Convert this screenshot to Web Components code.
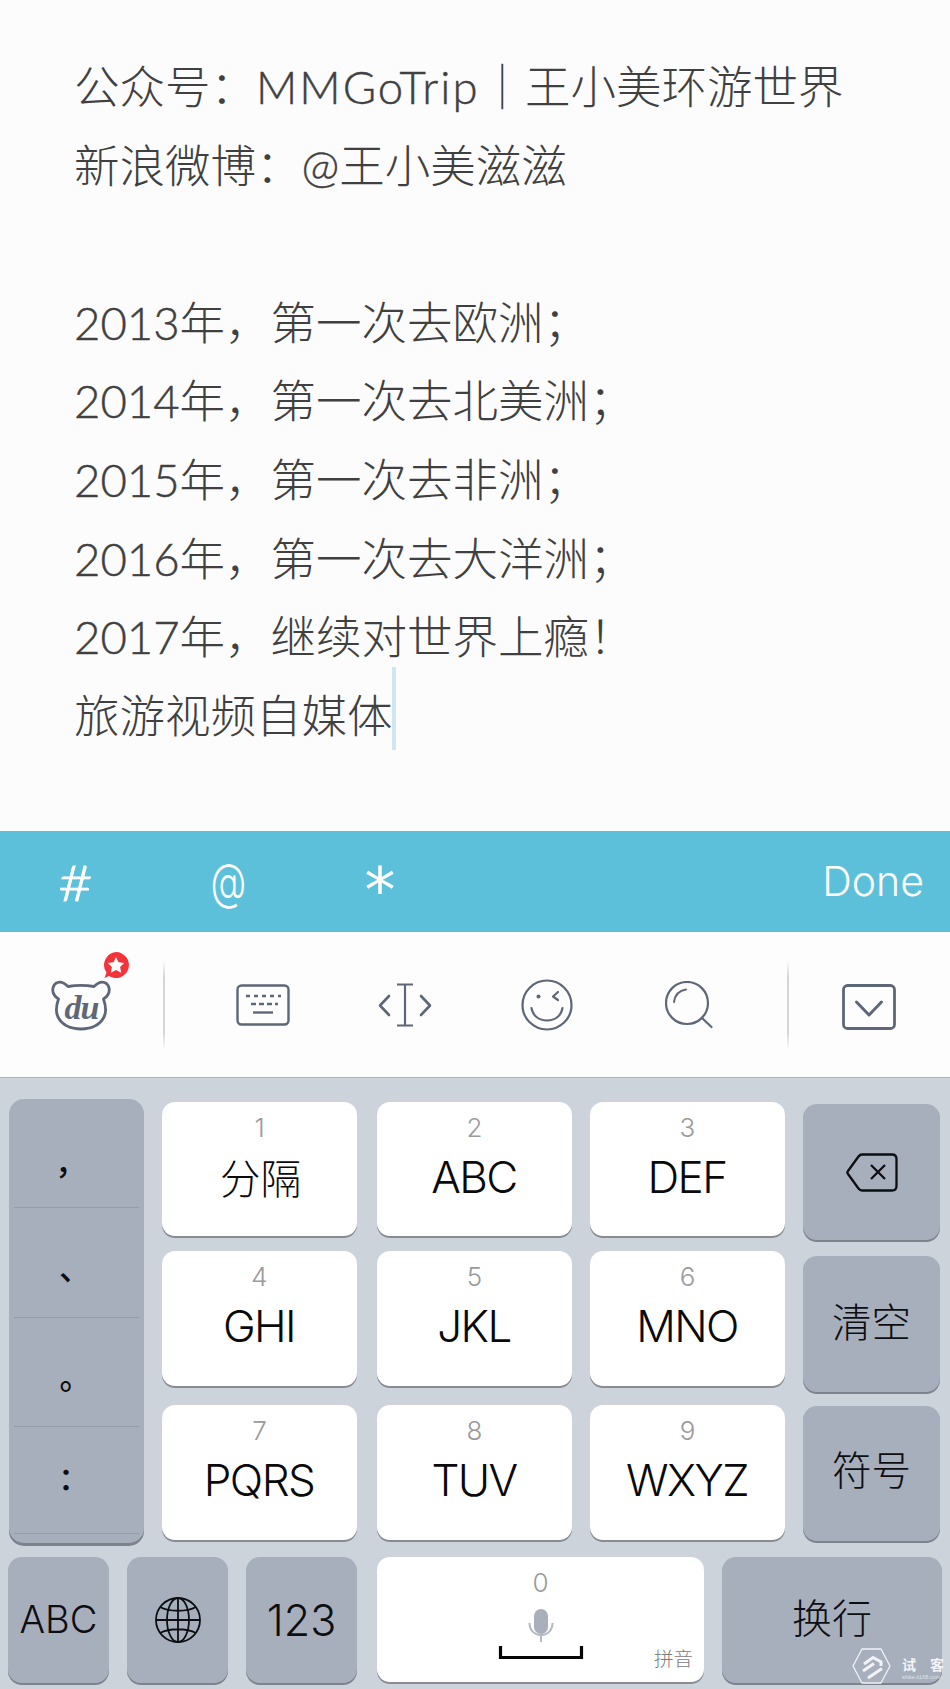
<!DOCTYPE html>
<html lang="zh"><head><meta charset="utf-8">
<style>
html,body{margin:0;padding:0;background:#cdd3db}
body{width:950px;height:1689px;overflow:hidden;font-family:"Noto Sans CJK SC",sans-serif}
</style></head>
<body>
<phone-screen>
<note-editor></note-editor>
<accessory-bar></accessory-bar>
<ime-toolbar></ime-toolbar>
<t9-keyboard></t9-keyboard>
</phone-screen>
<script>
function def(name,html){
  customElements.define(name,class extends HTMLElement{
    constructor(){super();const r=this.attachShadow({mode:'open'});r.innerHTML=typeof html==='function'?html(this):html;}
  });
}
def('phone-screen',`<style>:host{display:flex;flex-direction:column;width:950px;height:1689px;position:relative;overflow:hidden}</style><slot></slot>`);

def('note-editor',`<style>
:host{display:block;height:831px;box-sizing:border-box;background:#fcfcfc;padding:45px 0 0 74px;color:#404040;
font:300 45.500px/78.600px "Noto Sans CJK SC",sans-serif}
div{height:78.600px;white-space:nowrap}
i{font:300 45.500px/1 "Lato",sans-serif;-webkit-text-stroke:.45px #404040}
.w{letter-spacing:2px}
.c{display:inline-block;width:4px;height:0;position:relative;margin-left:-1px}
.c::after{content:"";position:absolute;left:0;top:-66px;width:4px;height:83px;background:#cfe7f1}
</style>
<div>公众号：<i class="w">MMGoTrip</i>｜王小美环游世界</div>
<div>新浪微博：<i>@</i>王小美滋滋</div>
<div></div>
<div><i>2013</i>年，第一次去欧洲；</div>
<div><i>2014</i>年，第一次去北美洲；</div>
<div><i>2015</i>年，第一次去非洲；</div>
<div><i>2016</i>年，第一次去大洋洲；</div>
<div><i>2017</i>年，继续对世界上瘾！</div>
<div>旅游视频自媒体<span class="c"></span></div>`);

def('accessory-bar',`<style>
:host{display:flex;height:101px;background:#5dc0da;color:#fff;align-items:center;font:300 42px/1 "Inter",sans-serif}
.s{width:152px;text-align:center}
.s b{display:inline-block;font-weight:inherit}
.d{margin-left:auto;padding-right:26px;font-size:41px}
</style>
<span class="s" style="font:300 50px/1 'Lato';-webkit-text-stroke:.8px #fff"><b style="transform:scale(1.2,1)">#</b></span>
<span class="s" style="font:300 54px/1 'Inter'"><b style="transform:scale(.68,.92)">@</b></span>
<span class="s" style="font:400 62px/1 'DejaVu Sans';padding-top:18px"><b>*</b></span>
<span class="d">Done</span>`);

const S='fill="none" stroke="#5d6778" stroke-linecap="round" stroke-linejoin="round"';
def('ime-toolbar',`<style>
:host{display:flex;height:146px;box-sizing:border-box;background:#fdfdfd;border-bottom:1px solid #aeb2b8;align-items:center}
.du{width:163px;height:100%;position:relative;display:flex;align-items:center;justify-content:center}
.sep{width:2px;height:90px;background:linear-gradient(#fdfdfd,#d3d5d8 20%,#d3d5d8 80%,#fdfdfd);align-self:flex-start;margin-top:28px}
.mid{display:flex;padding-left:27px;width:595px}
.cell{width:142px;display:flex;justify-content:center;align-items:center;height:60px;flex:none}
.end{flex:1;display:flex;justify-content:center;padding:4px 2px 0 0}
.bear{position:relative;width:60px;height:52px;margin:1px 0 0 -2px}
.bear svg{position:absolute;left:0;top:0}
.bear span{position:absolute;left:2px;right:0;top:14px;text-align:center;font:italic 700 34px/30px "Liberation Serif",serif;color:#5d6778;letter-spacing:-1px}
.badge{position:absolute;left:102px;top:19px}
</style>
<div class="du">
  <div class="bear"><svg width="60" height="52" viewBox="0 0 60 52"><path d="M17 7.500C13 3.500 9 2.500 6.500 3.500C2 5 .5 11 3 15.500C4 17.500 6 19 7.500 20C5 27 4.500 33 7 38C11 46 20 50 30 50C40 50 49 46 53 38C55.500 33 55 27 52.500 20C54 19 56 17.500 57 15.500C59.500 11 58 5 53.500 3.500C51 2.500 47 3.500 43 7.500C35 6 25 6 17 7.500Z" ${S} stroke-width="2.800"/></svg><span>du</span></div>
  <svg class="badge" width="28" height="28" viewBox="0 0 28 28"><path d="M14 1A13 13 0 1 1 7 25L2.500 27L4.500 21.500A13 13 0 0 1 14 1Z" fill="#f2333b"/><path d="M14 6l2.500 5.200 5.700.8-4.100 4 1 5.700-5.100-2.700-5.100 2.700 1-5.700-4.100-4 5.700-.8z" fill="#fff"/></svg>
</div>
<div class="sep"></div>
<div class="mid">
 <div class="cell"><svg width="54" height="42" viewBox="0 0 54 42"><rect x="1.500" y="1.500" width="51" height="39" rx="4" ${S} stroke-width="2.400"/><path d="M10 12h4M18 12h4M26 12h4M34 12h4M42 12h3M15 20h5M23 20h5M31 20h5M39 20h3" stroke="#5d6778" stroke-width="2.400"/><path d="M17 28.500h20" stroke="#5d6778" stroke-width="2.400"/></svg></div>
 <div class="cell"><svg width="54" height="44" viewBox="0 0 54 44"><path d="M11 13L2 22.500L11 32M43 13L52 22.500L43 32" ${S} stroke-width="2.600"/><path d="M19 1.500H35M27 1.500V42.500M19 42.500H35" fill="none" stroke="#5d6778" stroke-width="2.200"/></svg></div>
 <div class="cell"><svg width="52" height="52" viewBox="0 0 52 52"><circle cx="26" cy="26" r="24.500" ${S} stroke-width="2.200"/><circle cx="17.500" cy="17.500" r="2" fill="#5d6778"/><path d="M37 13L32 17.500L37 21" ${S} stroke-width="2.200"/><path d="M10.500 29C12 37 18 41.500 26 41.500C34 41.500 40 37 41.500 29" ${S} stroke-width="2.200"/></svg></div>
 <div class="cell"><svg width="48" height="48" viewBox="0 0 48 48"><circle cx="22" cy="22" r="21" ${S} stroke-width="2.200"/><path d="M9 21C10 14 14 9.500 21 8.500" ${S} stroke-width="2"/><path d="M37 37L46.500 46" ${S} stroke-width="2.200"/></svg></div>
</div>
<div class="sep"></div>
<div class="end"><svg width="54" height="46" viewBox="0 0 54 46"><rect x="1.500" y="1.500" width="51" height="43" rx="4" ${S} stroke-width="2.800"/><path d="M14.500 18L27 31L39.500 18" ${S} stroke-width="3"/></svg></div>`);

def('t9-key',(h)=>{
 const n=h.getAttribute('n')||'',l=h.getAttribute('l')||'';
 return `<style>
:host{display:grid;grid-template-rows:52px 46px;justify-items:center;align-items:center;background:#fff;border-radius:13px;box-shadow:0 2px 0 #868b94;width:195px;position:relative}
.n{font:300 26px/1 "Inter",sans-serif;color:#9a9a9c}
.l{font:300 44px/1 "Inter","Noto Sans CJK SC",sans-serif;color:#0a0a0a;letter-spacing:-1.600px;white-space:nowrap;margin-right:1px}
.l.z{font:300 40.500px/1 "Noto Sans CJK SC",sans-serif;letter-spacing:0;margin:0 0 0 2px}
</style><span class="n">${n}</span><span class="l ${/[^\x00-\x7f]/.test(l)?'z':''}">${l}</span>`});

def('gray-key',(h)=>{
 const f=h.getAttribute('f')||'39.5';
 return `<style>
:host{display:flex;align-items:center;justify-content:center;background:#a8afbc;border-radius:14px;box-shadow:0 2px 0 #7d828c;color:#0c0e12;
font:300 ${f}px/1 "Inter","Noto Sans CJK SC",sans-serif;box-sizing:border-box;white-space:nowrap;padding-bottom:${h.getAttribute('pb')||0}px}
</style><slot></slot>`});

def('punct-column',`<style>
:host{display:block;width:135px;height:444px;margin-top:21px;flex:none;background:#a8afbc;border-radius:15px;box-shadow:0 3px 0 #7d828c;position:relative;overflow:hidden;
font:500 32px/1 "Noto Sans CJK SC",sans-serif;color:#0c0e12}
div{box-sizing:border-box;margin:0 5px;border-bottom:1px solid #959ca9;display:flex;align-items:center;justify-content:center;padding-right:5px}
</style>
<div style="height:109px;padding:13px 11px 0 0">，</div><div style="height:110px;padding-top:6px;padding-right:3px">、</div><div style="height:109px;padding-top:5px;padding-right:2px">。</div><div style="height:107px;padding-bottom:8px">：</div>`);

def('t9-keyboard',`<style>
:host{display:block;flex:1;background:#cdd3db;position:relative;box-sizing:border-box;padding-left:9px}
.top{display:flex;height:464px}
.grid{display:grid;grid-template-columns:215px 213px 195px;grid-template-rows:134px 135px 135px;row-gap:15px;margin:24px 0 0 18px;height:434px}
.grid t9-key:nth-child(n+7){margin-top:4px;height:135px}
.right{display:flex;flex-direction:column;width:137px;margin:26px 0 0 18px;gap:16px}
.right gray-key:nth-child(1){height:136px}
.right gray-key:nth-child(2){height:136px}
.right gray-key:nth-child(3){height:135px;margin-top:-2px}
.bottom{display:flex;margin:0 0 0 -1px;height:126px;align-items:flex-start;padding-top:15px}
.b1{width:101px;height:126px}.b2{width:101px;height:126px;margin-left:18px}.b3{width:111px;height:126px;margin-left:18px}
.space{width:327px;height:125px;margin-left:20px;display:grid;grid-template-rows:52px 33px 13px;align-content:start;justify-items:center;align-items:center}
.b4{width:220px;height:126px;margin-left:18px}
.py{position:absolute;right:11px;bottom:15px;font:300 19.500px/1 "Noto Sans CJK SC",sans-serif;color:#7b7b7d}
.n0{font:300 26px/1 "Inter",sans-serif;color:#9a9a9c}
.space{background:#fff;border-radius:13px;box-shadow:0 2px 0 #868b94;position:relative}
.br{margin-top:8px;display:block;overflow:visible}
</style>
<div class="top">
 <punct-column></punct-column>
 <div class="grid">
  <t9-key n="1" l="分隔"></t9-key><t9-key n="2" l="ABC"></t9-key><t9-key n="3" l="DEF"></t9-key>
  <t9-key n="4" l="GHI"></t9-key><t9-key n="5" l="JKL"></t9-key><t9-key n="6" l="MNO"></t9-key>
  <t9-key n="7" l="PQRS"></t9-key><t9-key n="8" l="TUV"></t9-key><t9-key n="9" l="WXYZ"></t9-key>
 </div>
 <div class="right">
  <gray-key><svg width="52" height="39" viewBox="0 0 52 39"><path d="M16 1.500H46Q50.500 1.500 50.500 6V33Q50.500 37.500 46 37.500H16Q14 37.500 12.500 35.500L2 21Q.8 19.500 2 18L12.500 3.500Q14 1.500 16 1.500Z" fill="none" stroke="#0c0e12" stroke-width="2.300" stroke-linejoin="round"/><path d="M25 12L39 26M39 12L25 26" stroke="#0c0e12" stroke-width="2.300"/></svg></gray-key>
  <gray-key>清空</gray-key>
  <gray-key pb="4">符号</gray-key>
 </div>
</div>
<div class="bottom">
 <gray-key class="b1" f="38" pb="2">ABC</gray-key>
 <gray-key class="b2"><svg width="46" height="46" viewBox="0 0 46 46" fill="none" stroke="#0c0e12" stroke-width="1.800"><circle cx="23" cy="23" r="22"/><ellipse cx="23" cy="23" rx="11" ry="22"/><path d="M23 1V45M1 23H45M5 10C14 15 32 15 41 10M5 36C14 31 32 31 41 36"/></svg></gray-key>
 <gray-key class="b3" f="43">123</gray-key>
 <div class="space">
  <span class="n0">0</span>
  <svg width="26" height="33" viewBox="0 0 26 33"><rect x="6" y="0" width="14" height="25" rx="7" fill="#a9afbb"/><path d="M1.500 14C1.500 21 6 26 13 26C20 26 24.500 21 24.500 14M13 26V33" fill="none" stroke="#b3b8c2" stroke-width="2"/></svg>
  <svg class="br" width="84" height="13" viewBox="0 0 84 13"><path d="M1.500 0V11.500H82.500V0" fill="none" stroke="#050505" stroke-width="3.200"/></svg>
  <span class="py">拼音</span>
 </div>
 <gray-key class="b4" f="40" pb="2">换行</gray-key>
</div>
<shike-mark></shike-mark>`);

def('shike-mark',`<style>
:host{position:absolute;left:852px;top:570px;display:flex;gap:11px;color:#f1f3f6}
.t{display:flex;flex-direction:column;gap:3px;padding-top:9px;width:42px}
.a{font:700 14px/14px "Noto Sans CJK SC",sans-serif;display:flex;justify-content:space-between}
.b{font:400 5.500px/6px "Liberation Sans",sans-serif;white-space:nowrap;color:#dfe3e9}
</style>
<svg width="39" height="36" viewBox="0 0 39 36"><path d="M10 1H29L38 18L29 35H10L1 18Z" fill="none" stroke="#f1f3f6" stroke-width="1.300" stroke-linejoin="round"/><path d="M12 16L21 9.500L29 14V18M11 23L22 15.500M16 30L30 20.500" fill="none" stroke="#f1f3f6" stroke-width="3"/></svg>
<div class="t"><div class="a"><span>试</span><span>客</span></div><div class="b">shike.it168.com</div></div>`);
</script>
</body></html>
